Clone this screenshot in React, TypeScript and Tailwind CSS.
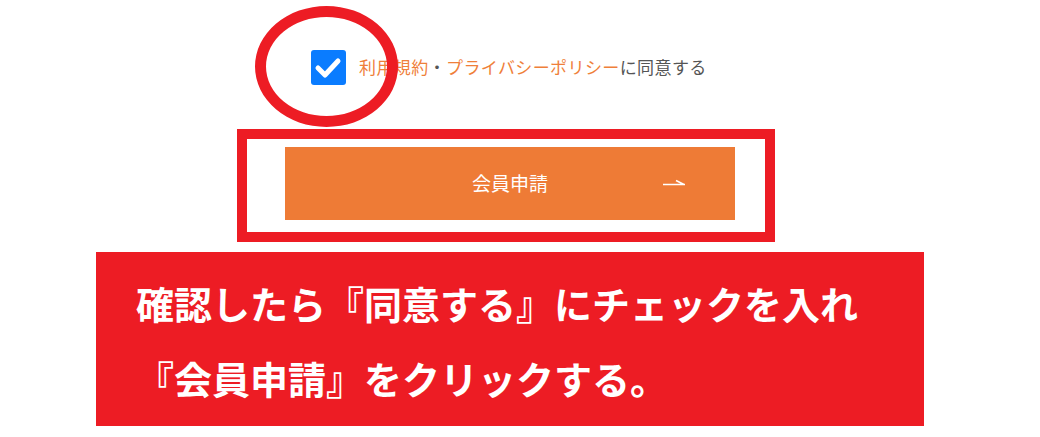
export default function App() {
	return (
		<div
			className="relative w-[1040px] h-[437px] overflow-hidden bg-white"
			style={{ fontFamily: '"Noto Sans CJK JP", "Noto Sans", sans-serif' }}
		>
			{/* Agree checkbox row */}
			<div className="ml-[311px] pt-[50px] flex items-center gap-[13px]">
				<div className="w-[35px] h-[35px] rounded-[3px] bg-[#0a7cff] flex items-center justify-center">
					<svg width="35" height="35" viewBox="0 0 35 35">
						<path
							d="M7 18 L14 25 L27 11"
							fill="none"
							stroke="#fff"
							strokeWidth="5"
							strokeLinecap="round"
							strokeLinejoin="round"
						/>
					</svg>
				</div>
				<p className="text-[17px] leading-none tracking-[0.4px] text-[#555] -mt-[3px]">
					<span className="text-[#ef7f3a]">利用規約</span>・
					<span className="text-[#ef7f3a]">プライバシーポリシー</span>に同意する
				</p>
			</div>

			{/* Annotation circle */}
			<div className="absolute left-[255px] top-[6px] w-[143px] h-[121px] rounded-[50%] border-[11px] border-[#ed1c24]" />

			{/* Highlighted submit button */}
			<div className="ml-[237px] mt-[44px] w-[538px] h-[113px] border-[10px] border-[#ed1c24] pl-[38px] pt-[8px]">
				<button className="relative w-[450px] h-[73px] bg-[#ee7b36] text-white text-[19px] flex items-center justify-center">
					会員申請
					<svg
						className="absolute left-[377px] top-[31px]"
						width="24"
						height="8"
						viewBox="0 0 24 8"
					>
						<path d="M1 6.5 H23 M14 2.5 L22 6.5" fill="none" stroke="#fff" strokeWidth="1.6" />
					</svg>
				</button>
			</div>

			{/* Instruction banner */}
			<div className="ml-[96px] mt-[10px] w-[828px] h-[174px] bg-[#ed1c24] pl-[40px] pt-[13px] text-white font-bold text-[38px] leading-[75px]">
				<p>確認したら『同意する』にチェックを入れ</p>
				<p>『会員申請』をクリックする。</p>
			</div>
		</div>
	);
}
